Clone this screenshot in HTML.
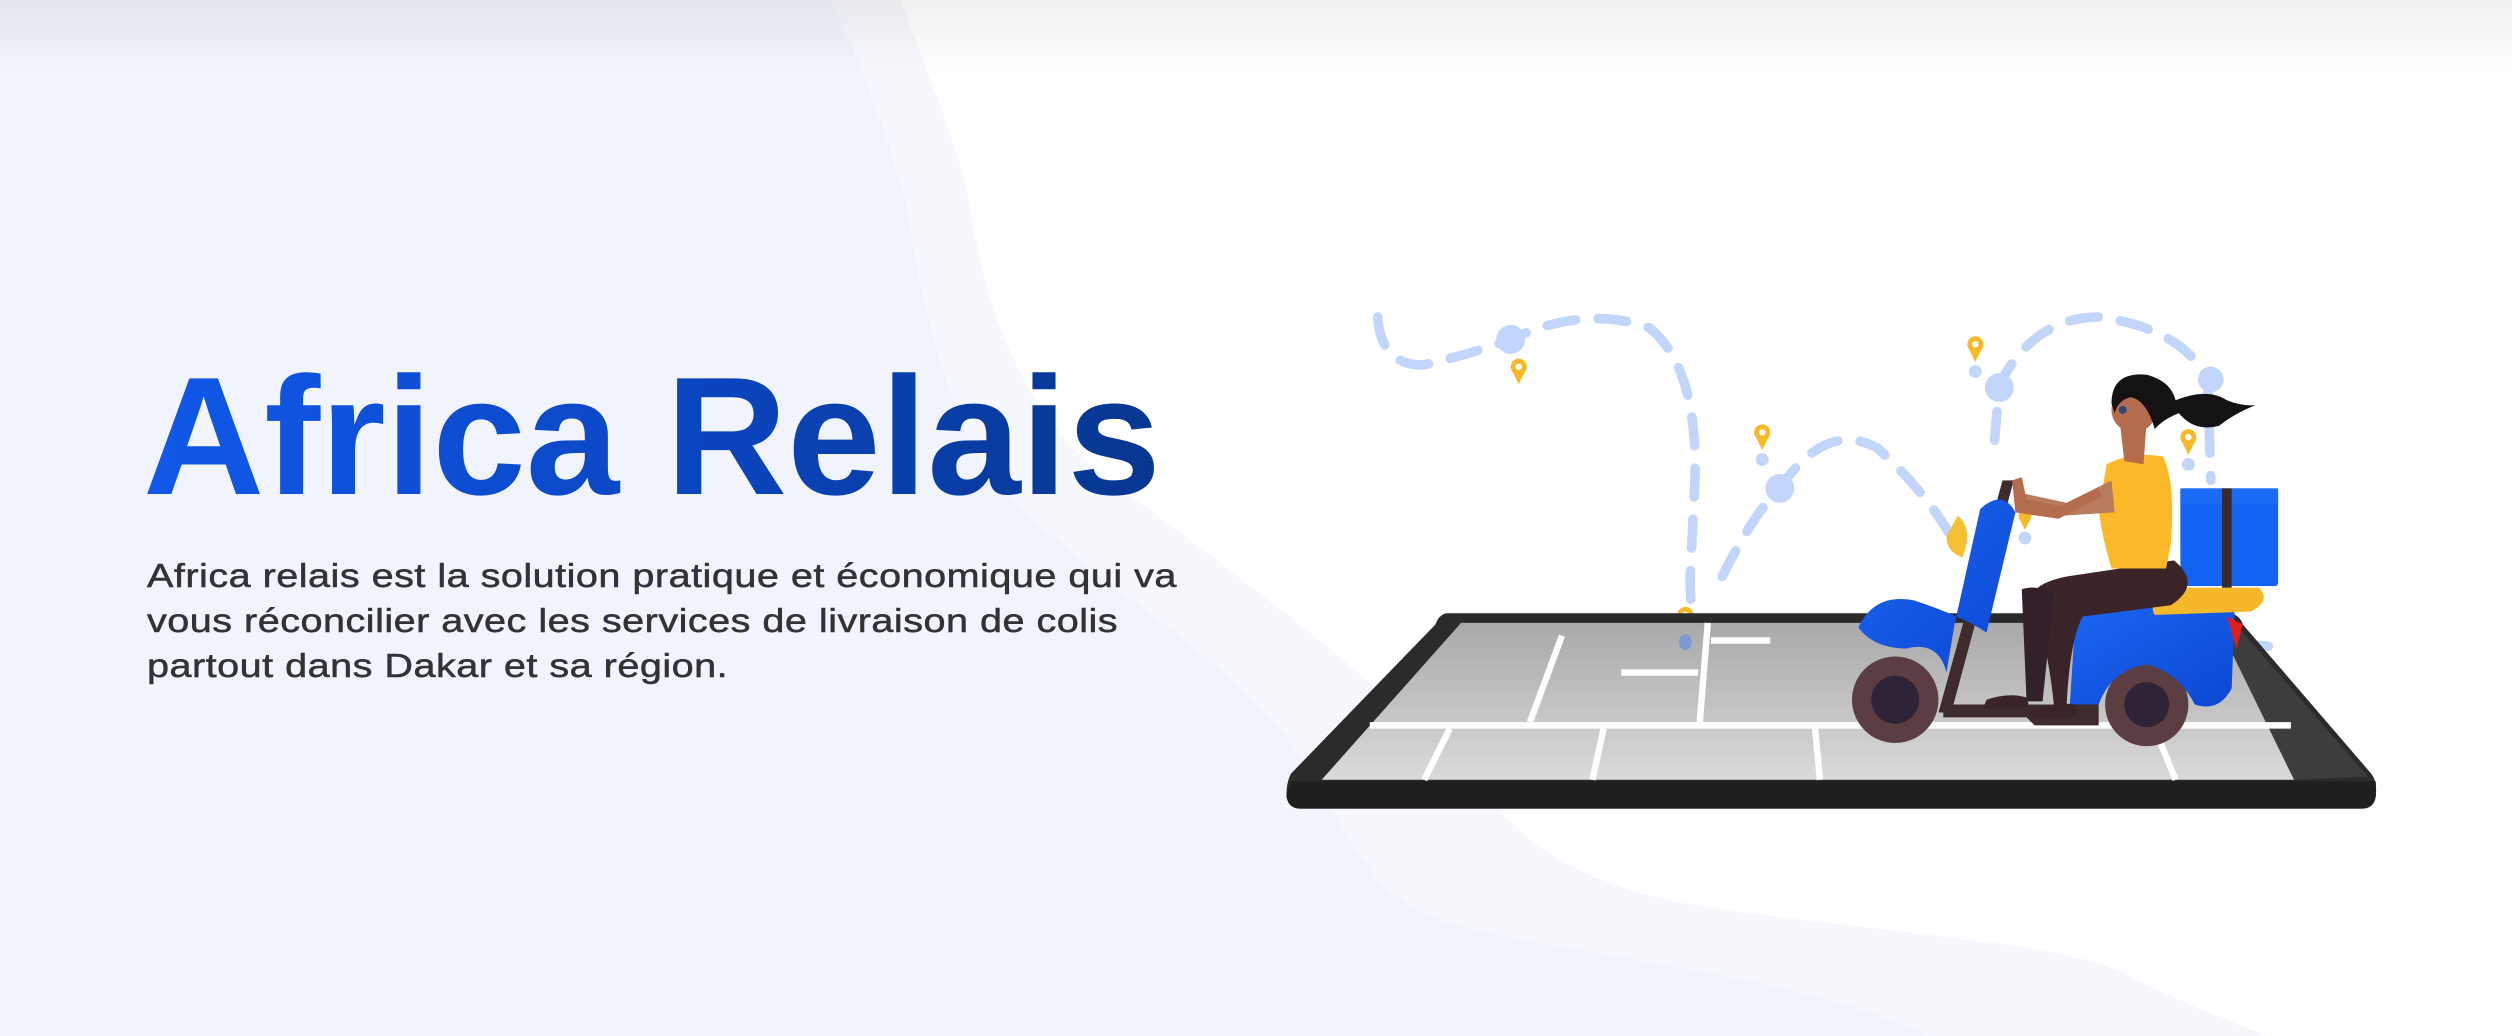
<!DOCTYPE html>
<html><head><meta charset="utf-8"><style>
html,body{margin:0;padding:0}
body{width:2512px;height:1036px;position:relative;overflow:hidden;background:#fff;font-family:"Liberation Sans",sans-serif}
svg.bg{position:absolute;left:0;top:0;width:2512px;height:1036px}
h1{position:absolute;left:143px;top:336px;margin:0;font-size:168px;line-height:200px;font-weight:bold;letter-spacing:0px;
background:linear-gradient(90deg,#1158ea 0%,#0b47c4 50%,#06368f 100%);-webkit-background-clip:text;background-clip:text;color:transparent}
p{position:absolute;left:147px;top:553px;margin:0;font-size:33px;line-height:45px;color:#333335;letter-spacing:0.4px;white-space:nowrap;transform:scaleX(1.2);transform-origin:0 0;-webkit-text-stroke:0.5px #333335}
</style></head><body>
<svg class="bg" viewBox="0 0 1568 647" preserveAspectRatio="none">
<defs>
<linearGradient id="top" x1="0" y1="0" x2="0" y2="1"><stop offset="0" stop-color="#000" stop-opacity="0.06"/><stop offset="1" stop-color="#000" stop-opacity="0"/></linearGradient>
<linearGradient id="scr" x1="0" y1="0" x2="0" y2="1"><stop offset="0" stop-color="#a9a9a9"/><stop offset="1" stop-color="#dadada"/></linearGradient>
<linearGradient id="blu" x1="0" y1="0" x2="1" y2="1"><stop offset="0" stop-color="#1b66f2"/><stop offset="1" stop-color="#0c47d4"/></linearGradient>
</defs>
<path d="M0,0 L562,0 C585,60 600,100 605,125 C620,230 660,280 709,312 C800,380 880,440 934,504 C970,545 1020,560 1075,568 C1200,585 1300,590 1332,611 C1370,630 1400,640 1415,647 L0,647Z" fill="#f7f8fd"/>
<path d="M0,0 L518,0 C548,60 560,110 565,125 C580,220 600,280 632,312 C700,380 790,420 831,504 C860,560 880,570 914,579 C1000,600 1130,610 1203,647 L0,647Z" fill="#f1f4fc"/>
<rect x="0" y="0" width="1568" height="45" fill="url(#top)"/>
<g fill="none" stroke="#c2d5fb" stroke-width="6" stroke-linecap="round" stroke-dasharray="18 14">
<path d="M860,198 Q862,228 888,228 Q915,222 943,212 Q990,190 1030,205 Q1060,230 1058,300 L1055,360 Q1055,392 1062,398"/>
<path d="M1075,360 Q1095,320 1111,305 Q1140,262 1172,280 Q1200,305 1218,335"/>
<path d="M1245,275 L1248,240 Q1270,198 1310,198 Q1362,205 1378,237 L1380,300"/>
<path d="M1398,402 L1420,404"/>
</g>
<g fill="#c2d5fb"><circle cx="943" cy="212" r="9"/><circle cx="1111" cy="305" r="9"/><circle cx="1248" cy="242" r="9"/><circle cx="1380" cy="237" r="8"/><circle cx="1100" cy="287" r="4"/><circle cx="1233" cy="232" r="4"/><circle cx="1366" cy="290" r="4"/><circle cx="1264" cy="336" r="4"/></g>
<g fill="#f8b928">
<circle cx="948" cy="229" r="5"/><path d="M943,230 L948,240 L953,230Z"/>
<circle cx="1100" cy="270" r="5"/><path d="M1095,271 L1100,281 L1105,271Z"/>
<circle cx="1233" cy="215" r="5"/><path d="M1228,216 L1233,226 L1238,216Z"/>
<circle cx="1366" cy="273" r="5"/><path d="M1361,274 L1366,284 L1371,274Z"/>
<circle cx="1052" cy="384" r="5"/><path d="M1047,385 L1052,395 L1057,385Z"/>
<circle cx="1264" cy="322" r="4"/><path d="M1260,323 L1264,331 L1268,323Z"/>
</g>
<g fill="#fff"><circle cx="948" cy="229" r="2"/><circle cx="1100" cy="270" r="2"/><circle cx="1233" cy="215" r="2"/><circle cx="1366" cy="273" r="2"/><circle cx="1052" cy="384" r="2"/></g>
<path d="M903,383 L1392,383 Q1398,384 1400,390 L1480,483 Q1484,488 1483,497 Q1482,505 1474,505 L812,505 Q804,505 803,497 Q803,488 806,483 L896,390 Q898,384 903,383Z" fill="#2b2b2b"/>
<path d="M806,488 L1483,488 L1483,497 Q1482,505 1474,505 L812,505 Q804,505 803,497Z" fill="#1f1f1f"/>
<path d="M912,389 L1384,389 L1432,487 L825,487Z" fill="url(#scr)"/>
<path d="M1384,389 L1400,395 L1478,485 L1432,487Z" fill="#4a4a4a" opacity="0.6"/>
<g stroke="#fff" stroke-width="4" fill="none">
<path d="M855,453 L1430,453"/>
<path d="M975,397 L955,451"/><path d="M1066,389 L1061,451"/>
<path d="M905,455 L889,487"/><path d="M1001,455 L994,487"/><path d="M1133,455 L1136,487"/><path d="M1345,455 L1358,487"/>
<path d="M1068,400 L1105,400"/><path d="M1012,420 L1060,420"/>
</g>
<ellipse cx="1052" cy="401" rx="4" ry="5" fill="#7d9bd2"/>
<circle cx="1183" cy="437" r="27" fill="#5a3e42"/><circle cx="1183" cy="437" r="15" fill="#2e2436"/>
<circle cx="1340" cy="440" r="26" fill="#5a3e42"/><circle cx="1340" cy="440" r="14" fill="#2e2436"/>
<path d="M1213,440 L1310,440 L1310,453 L1270,453 L1265,448 L1213,448Z" fill="#3d2b2e"/>
<path d="M1250,300 L1257,300 L1218,445 L1210,445Z" fill="#3d2b2e"/>
<path d="M1236,318 Q1250,305 1258,320 L1240,395 Q1225,385 1195,375 Q1170,370 1160,392 Q1170,405 1190,405 Q1210,400 1215,420 L1220,390Z" fill="url(#blu)"/>
<path d="M1222,322 Q1232,330 1225,348 Q1215,345 1215,335Z" fill="#f5c032"/>
<path d="M1296,378 L1395,378 L1393,430 Q1385,445 1370,440 Q1360,420 1340,415 Q1318,418 1310,440 L1292,440Z" fill="url(#blu)"/>
<path d="M1390,385 L1400,390 L1396,405Z" fill="#e01d1d"/>
<path d="M1355,367 L1410,367 Q1418,375 1405,382 L1345,384 Q1340,376 1355,367Z" fill="#f5b82a"/>
<rect x="1361" y="305" width="61" height="61" rx="2" fill="#1363f2"/>
<rect x="1361" y="305" width="61" height="10" fill="#1a6bf8"/>
<rect x="1387" y="305" width="6" height="62" fill="#3a2a30"/>
<path d="M1357,350 Q1375,365 1355,378 L1300,385 Q1292,400 1290,440 L1282,440 Q1278,400 1268,378 Q1265,365 1290,360 Z" fill="#3a2428"/>
<path d="M1262,368 Q1270,365 1282,370 L1275,438 L1265,438Z" fill="#32202a"/>
<path d="M1240,437 Q1255,432 1266,436 L1266,442 L1238,442Z" fill="#3a2428"/>
<path d="M1268,444 Q1284,438 1296,440 L1296,448 L1266,448Z" fill="#3a2428"/>
<path d="M1315,290 Q1330,282 1350,285 Q1358,300 1355,340 L1352,355 L1318,355 Q1312,335 1310,318Z" fill="#fbb92a"/>
<path d="M1318,300 L1290,314 L1262,308 L1262,314 L1288,322 L1320,320Z" fill="#b77c5e"/>
<path d="M1312,310 L1285,324 L1258,320 L1256,300 L1262,298 L1265,312 L1286,316 L1310,305Z" fill="#b46c4c"/>
<path d="M1323,262 L1340,262 L1338,290 L1326,288Z" fill="#b46c4c"/>
<circle cx="1332" cy="256" r="14" fill="#b46c4c"/>
<path d="M1318,252 Q1318,232 1340,234 Q1355,238 1358,250 Q1378,242 1390,250 Q1400,254 1408,253 Q1395,258 1385,266 Q1370,270 1360,258 Q1350,262 1345,268 Q1340,250 1330,248 Q1322,250 1320,258Z" fill="#141214"/>
<circle cx="1325" cy="256" r="2.5" fill="#2b4a7a"/>
</svg>
<h1>Africa Relais</h1>
<p>Africa relais est la solution pratique et économique qui va<br>vous réconcilier avec les services de livraison de colis<br>partout dans Dakar et sa région.</p>
</body></html>
